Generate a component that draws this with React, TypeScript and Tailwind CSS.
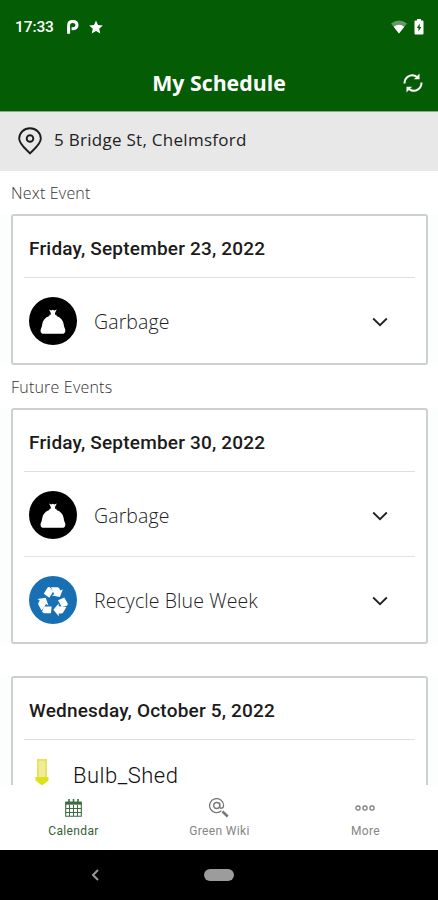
import React from "react";

function GarbageIcon() {
  return (
    <span className="flex size-12 shrink-0 items-center justify-center rounded-full bg-black">
      <svg width="48" height="48" viewBox="0 0 48 48" fill="#fff">
        <path d="M20 12.500l2.300.9 1.600-.6 1.600.6 2.300-.9-1.800 3.500v1.700h1.500v1.200c4.200 1.300 6.700 4.300 7.200 8.300l.3 2 1.200 3.300c.5 2-.2 3.700-1.800 4.200H13.500c-1.600-.5-2.300-2.200-1.800-4.200l1.200-3.300.3-2c.5-4 3-7 7.200-8.300v-1.200h1.400v-1.700z" />
      </svg>
    </span>
  );
}

function RecycleIcon() {
  return (
    <span className="flex size-12 shrink-0 items-center justify-center rounded-full bg-[#1870b3]">
      <svg width="48" height="48" viewBox="0 0 48 48" fill="#fff">
        {[0, 120, 240].map((angle) => (
          <g key={angle} transform={`rotate(${angle} 24 25.500)`}>
            <path d="M14.800 17.800 18.300 12q.9-1.400 2.500-.7l3.500 3.900-3.900 6.600z" />
            <path d="M22 11.200h6.200q1.400 0 2.100 1.300l1.200 2 2.400-1.300-3 7.900-8-1.500 2.300-1.400z" />
          </g>
        ))}
      </svg>
    </span>
  );
}

function Chevron() {
  return (
    <svg width="16" height="10" viewBox="0 0 16 10" fill="none" stroke="#222" strokeWidth="1.800">
      <path d="M1.200 1.500 8 8.200 14.800 1.500" />
    </svg>
  );
}

function EventRow({ icon, label }: { icon: React.ReactNode; label: string }) {
  return (
    <div className="flex h-[85px] items-center pl-[5px] pt-px">
      {icon}
      <span className="ml-[17px] grow pt-0.5 font-['Open_Sans',sans-serif] text-[19.500px] font-light tracking-[0.100px] text-[#222]">
        {label}
      </span>
      <span className="mr-[27px] pt-0.5">
        <Chevron />
      </span>
    </div>
  );
}

function EventCard({ date, className, children }: { date: string; className: string; children: React.ReactNode }) {
  return (
    <section className={`ml-[11px] w-[417px] shrink-0 rounded-[3px] border-2 border-[#ccd0d0] bg-white px-[11px] ${className}`}>
      <h2 className="flex h-[61px] items-center pl-[5px] pt-1.5 font-[Roboto,sans-serif] text-[19px] font-medium tracking-[0.200px] text-[#1b1b1b]">
        {date}
      </h2>
      <div className="divide-y divide-[#e2e2e2] border-t border-[#dedede]">{children}</div>
    </section>
  );
}

function StatusBar() {
  return (
    <div className="flex h-[54px] items-center pl-[15px] pr-[14px] text-white">
      <span className="w-[52px] pt-0.5 font-[Roboto,sans-serif] text-[15.500px] font-medium tracking-[-0.100px]">17:33</span>
      <svg width="12" height="14" viewBox="0 0 12 14" fill="none" stroke="#fff" strokeWidth="3">
        <path d="M1.600 13.800V5.500C1.600 3 3.300 1.600 5.800 1.600C8.700 1.600 10 3.200 10 5.100C10 7.200 8.600 8.700 6 8.700H4.600" />
      </svg>
      <svg className="ml-[10px]" width="14" height="14" viewBox="0 0 14 14" fill="#fff">
        <path d="M7 .4l2 4.500 4.800.5-3.600 3.300 1.100 4.900L7 11.100l-4.300 2.500 1.100-4.900L.2 5.400 5 4.900z" />
      </svg>
      <svg className="ml-auto" width="16" height="14" viewBox="0 0 16 14">
        <path d="M0 3.500Q8-2.500 16 3.500L8 13.500z" fill="#fff" opacity=".38" />
        <path d="M2.700 6.800Q8 2.800 13.300 6.800L8 13.500z" fill="#fff" />
      </svg>
      <svg className="ml-[7px]" width="10" height="16" viewBox="0 0 10 16">
        <path d="M3 0h4v1.500h1.500Q9.500 1.500 9.500 2.500v12q0 1-1 1h-7q-1 0-1-1v-12q0-1 1-1H3z" fill="#fff" />
        <path d="M5.700 4.500 2.800 9H4.500v3.500L7.300 8H5.700z" fill="#075c07" />
      </svg>
    </div>
  );
}

function SyncIcon() {
  return (
    <svg width="20" height="20" viewBox="0 0 20 20" fill="none" stroke="#fff" strokeWidth="2">
      <path d="M1.500 10.500C1.500 4.500 7 .5 12.500 3L14.500 4.500" />
      <path d="M18.500 9.500C18.500 15.500 13 19.500 7.500 17L5.500 15.500" />
      <path d="M16.500.6v5.600h-5.600zM3.500 19.400v-5.600h5.600z" fill="#fff" stroke="none" />
    </svg>
  );
}

function CalendarIcon() {
  return (
    <svg width="17" height="18" viewBox="0 0 17 18" fill="none" stroke="#3d6b42">
      <path d="M.7 3.200h15.600v14H.7z" strokeWidth="1.100" />
      <path d="M.7 4.200h15.600" strokeWidth="3" />
      <path d="M4 0v4M8.500 0v4M13 0v4" strokeWidth="1.600" />
      <path d="M4.500 6v11M8.500 6v11M12.500 6v11M1 9.500h15M1 13.500h15" strokeWidth="1" />
    </svg>
  );
}

function WikiIcon() {
  return (
    <svg width="20" height="20" viewBox="0 0 20 20" fill="none" stroke="#777" strokeWidth="1.300">
      <path d="M12.500 12.600A7 7 0 1 1 14.600 7.500C14.600 10.300 11.300 11.200 10.700 9V4.500" />
      <circle cx="7.700" cy="7.500" r="3" />
      <path d="M13.500 13.500 18.700 18.500" strokeWidth="2.600" />
    </svg>
  );
}

function MoreIcon() {
  return (
    <svg width="20" height="8" viewBox="0 0 20 8" fill="none" stroke="#777" strokeWidth="1.200">
      <circle cx="3" cy="4" r="2.100" />
      <circle cx="10" cy="4" r="2.100" />
      <circle cx="17" cy="4" r="2.100" />
    </svg>
  );
}

function Tab({ icon, label, color }: { icon: React.ReactNode; label: string; color: string }) {
  return (
    <div className={`flex flex-1 flex-col items-center ${color}`}>
      <span className="mt-[13px] flex h-5 items-center">{icon}</span>
      <span className="mt-[5px] pl-px font-[Roboto,sans-serif] text-[12px] leading-4 tracking-[0.350px]">{label}</span>
    </div>
  );
}

export default function App() {
  return (
    <div className="flex h-[900px] w-[438px] flex-col overflow-hidden bg-[#fcfefd]">
      <header className="h-[112px] shrink-0 border-b border-[#8da98d] bg-[#045c05]">
        <StatusBar />
        <div className="grid h-[57px] grid-cols-[1fr_auto_1fr] items-center text-white">
          <h1 className="col-start-2 pt-px font-['Open_Sans',sans-serif] text-[21.300px] font-bold">My Schedule</h1>
          <span className="mr-[15px] justify-self-end">
            <SyncIcon />
          </span>
        </div>
      </header>

      <div className="flex h-[59px] shrink-0 items-center bg-[#e8e8e8] pl-[18px] text-[#222]">
        <svg className="-mt-px" width="24" height="28" viewBox="0 0 24 28" fill="none" stroke="#1d1d1d" strokeWidth="1.900">
          <path d="M12 26.300C8.500 22.500 1.200 17.500 1.200 11.500a10.800 10.300 0 0 1 21.600 0C22.800 17.500 15.500 22.500 12 26.300z" />
          <circle cx="12" cy="11.500" r="3.300" />
        </svg>
        <span className="-mt-1 ml-3 font-['Open_Sans',sans-serif] text-[17px] tracking-[0.280px]">5 Bridge St, Chelmsford</span>
      </div>

      <main className="flex min-h-0 grow flex-col overflow-hidden font-['Open_Sans',sans-serif] text-[#333]">
        <p className="flex h-[43px] shrink-0 items-center bg-white pl-[11px] text-[16px] font-light tracking-[0.200px]">Next Event</p>
        <EventCard date="Friday, September 23, 2022" className="h-[151px]">
          <EventRow icon={<GarbageIcon />} label="Garbage" />
        </EventCard>
        <p className="flex h-[43px] shrink-0 items-center bg-white pl-[11px] text-[16px] font-light tracking-[0.200px]">Future Events</p>
        <EventCard date="Friday, September 30, 2022" className="h-[236px]">
          <EventRow icon={<GarbageIcon />} label="Garbage" />
          <EventRow icon={<RecycleIcon />} label="Recycle Blue Week" />
        </EventCard>
        <div className="h-8 shrink-0 bg-white" />
        <EventCard date="Wednesday, October 5, 2022" className="h-[160px]">
          <div className="flex h-[70px] items-center pl-[11px]">
            <svg className="-mt-[6px]" width="14" height="28" viewBox="0 0 14 28">
              <path d="M2 1h10v18H2z" fill="#f0ec98" />
              <path d="M3 1v18M11 1v18M2 2h10" stroke="#e6e052" strokeWidth="1.500" />
              <path d="M.5 19h13v3.500L7 27.500.5 22.500z" fill="#dfe01c" />
            </svg>
            <span className="ml-6 font-[Roboto,sans-serif] text-[22px] font-light tracking-[0.500px] text-[#111]">
              Bulb_Shed
            </span>
          </div>
        </EventCard>
      </main>

      <nav className="flex h-[65px] shrink-0 bg-white">
        <Tab icon={<CalendarIcon />} label="Calendar" color="text-[#326237]" />
        <Tab icon={<WikiIcon />} label="Green Wiki" color="text-[#858585]" />
        <Tab icon={<MoreIcon />} label="More" color="text-[#858585]" />
      </nav>

      <footer className="grid h-[50px] shrink-0 grid-cols-[1fr_auto_1fr] items-center bg-black">
        <svg className="ml-[91px]" width="8" height="12" viewBox="0 0 8 12" fill="none" stroke="#999" strokeWidth="2">
          <path d="M7 1 2 6l5 5" />
        </svg>
        <span className="h-3 w-[30px] rounded-full bg-[#9c9c9c]" />
      </footer>
    </div>
  );
}
